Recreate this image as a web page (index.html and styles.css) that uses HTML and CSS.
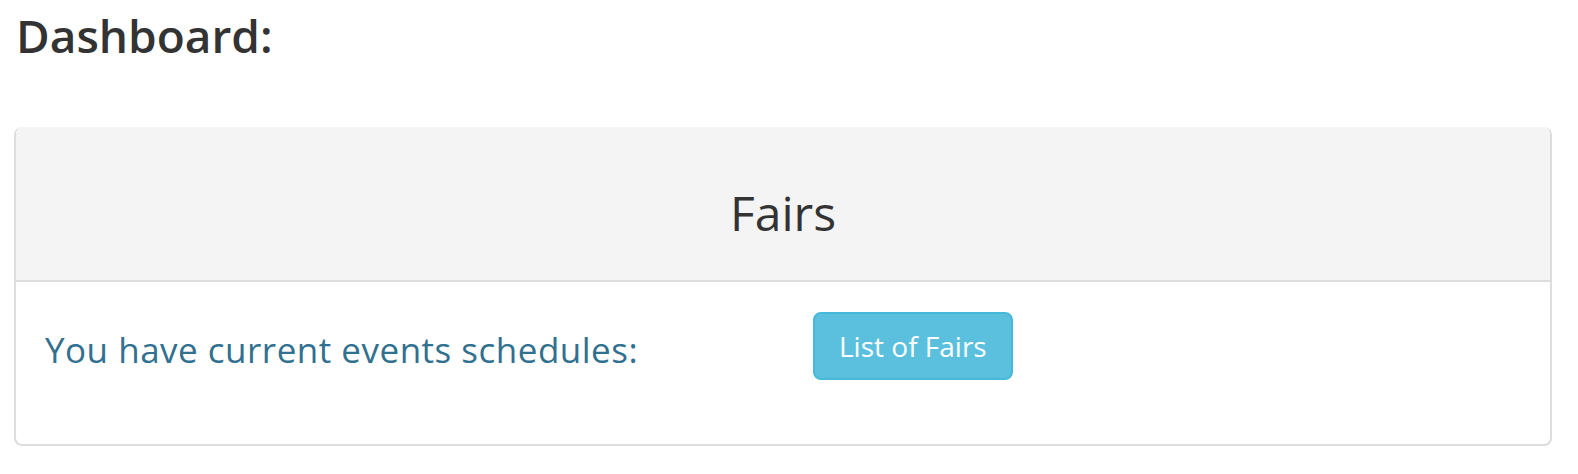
FILE: index.html
```html
<!DOCTYPE html>
<html>
<head>
<meta charset="utf-8">
<link rel="stylesheet" href="styles.css">
</head>
<body>
<div class="page">
  <h1 class="title">Dashboard:</h1>
  <div class="card">
    <div class="card-header">
      <h2 class="card-title">Fairs</h2>
    </div>
    <div class="card-body">
      <div class="col">
        <p class="info">You have current events schedules:</p>
      </div>
      <div class="col">
        <button class="btn">List of Fairs</button>
      </div>
    </div>
  </div>
</div>
</body>
</html>
```
FILE: styles.css
```css
html, body {
  margin: 0;
  padding: 0;
  background: #fff;
}
body {
  font-family: "Open Sans", "Liberation Sans", sans-serif;
  color: #333;
}
.page {
  padding: 10px 26px 0 14px;
}
.title {
  margin: 0 0 66px 2px;
  font-size: 46px;
  font-weight: 600;
  line-height: 1.1;
  color: #333;
}
.card {
  border: 2px solid #ddd;
  border-top: 0;
  border-radius: 8px;
  background: #fff;
}
.card-header {
  background: #f4f4f4;
  border-bottom: 2px solid #ddd;
  border-radius: 8px 8px 0 0;
  padding: 60px 0 41px;
  text-align: center;
}
.card-title {
  margin: 0;
  font-size: 48px;
  font-weight: 400;
  line-height: 1.1;
  color: #333;
}
.card-body {
  display: flex;
  padding: 30px 0 64px;
}
.col {
  flex: 1 1 50%;
  padding: 0 30px 0 29px;
}
.info {
  margin: 15px 0 0;
  font-size: 35px;
  letter-spacing: 0.5px;
  line-height: 45px;
  color: #31708f;
}
.btn {
  font-family: "Open Sans", "Liberation Sans", sans-serif;
  font-size: 28px;
  line-height: 40px;
  padding: 12px 24px;
  color: #fff;
  background: #5bc0de;
  border: 2px solid #46b8da;
  border-radius: 8px;
  margin-left: 1px;
}
```
